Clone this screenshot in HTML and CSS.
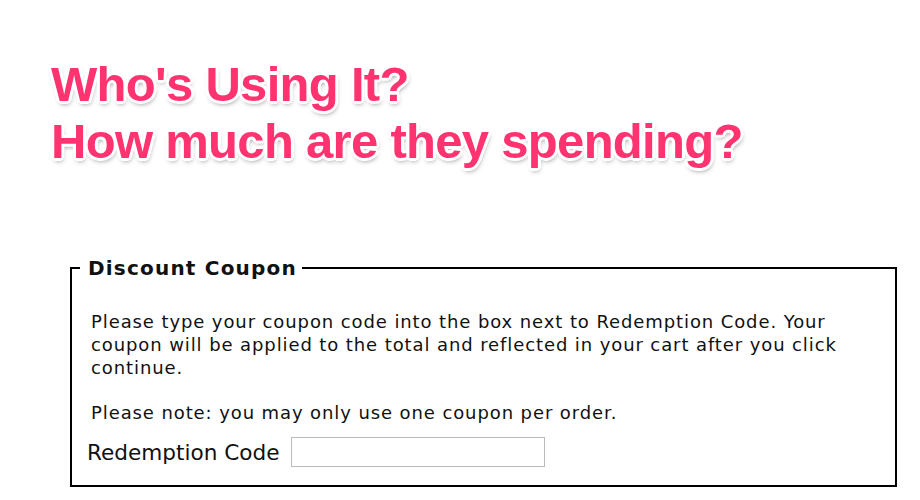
FILE: index.html
```html
<!DOCTYPE html>
<html>
<head>
<meta charset="utf-8">
<link rel="stylesheet" href="styles.css">
</head>
<body>
<div class="page">
  <h1 class="headline">Who's Using It?<br>How much are they spending?</h1>
  <fieldset class="coupon">
    <legend class="coupon-legend">Discount Coupon</legend>
    <p class="coupon-text first">Please type your coupon code into the box next to Redemption Code. Your coupon will be applied to the total and reflected in your cart after you click continue.</p>
    <p class="coupon-text">Please note: you may only use one coupon per order.</p>
    <div class="code-row">
      <label class="code-label">Redemption Code</label>
      <input class="code-input" type="text">
    </div>
  </fieldset>
</div>
</body>
</html>
```

FILE: styles.css
```css
html, body {
  margin: 0;
  padding: 0;
  background: #fff;
}
.page {
  padding-top: 56px;
}
.headline {
  margin: 0 0 0 51px;
  font-family: "Liberation Sans", Arial, sans-serif;
  font-weight: bold;
  font-size: 49px;
  line-height: 57px;
  letter-spacing: -0.7px;
  color: #ff3370;
  text-shadow:
    -2px -2px 0 #fff, 2px -2px 0 #fff, -2px 2px 0 #fff, 2px 2px 0 #fff,
    0 -3px 0 #fff, 0 3px 0 #fff, -3px 0 0 #fff, 3px 0 0 #fff,
    1px 3px 5px rgba(0,0,0,0.45);
}
.coupon {
  margin: 86px 0 0 70px;
  width: 827px;
  box-sizing: border-box;
  border: 2px solid #000;
  padding: 10px 18px 18px 19px;
  font-family: "DejaVu Sans", Verdana, sans-serif;
  color: #111;
}
.coupon-legend {
  font-weight: bold;
  font-size: 20px;
  letter-spacing: 1.2px;
  padding: 0 5px 0 8px;
  margin-left: -11px;
}
.coupon-text {
  margin: 0 0 22px 0;
  font-size: 18px;
  line-height: 23px;
  letter-spacing: 0.9px;
}
.coupon-text.first {
  margin-top: 20px;
}
.code-row {
  display: flex;
  align-items: center;
  gap: 11px;
  margin-left: -4px;
  margin-top: -9px;
}
.code-label {
  font-size: 21.6px;
}
.code-input {
  width: 254px;
  height: 30px;
  box-sizing: border-box;
  border: 1px solid #bbb;
  margin: 0;
  padding: 0;
}
```
